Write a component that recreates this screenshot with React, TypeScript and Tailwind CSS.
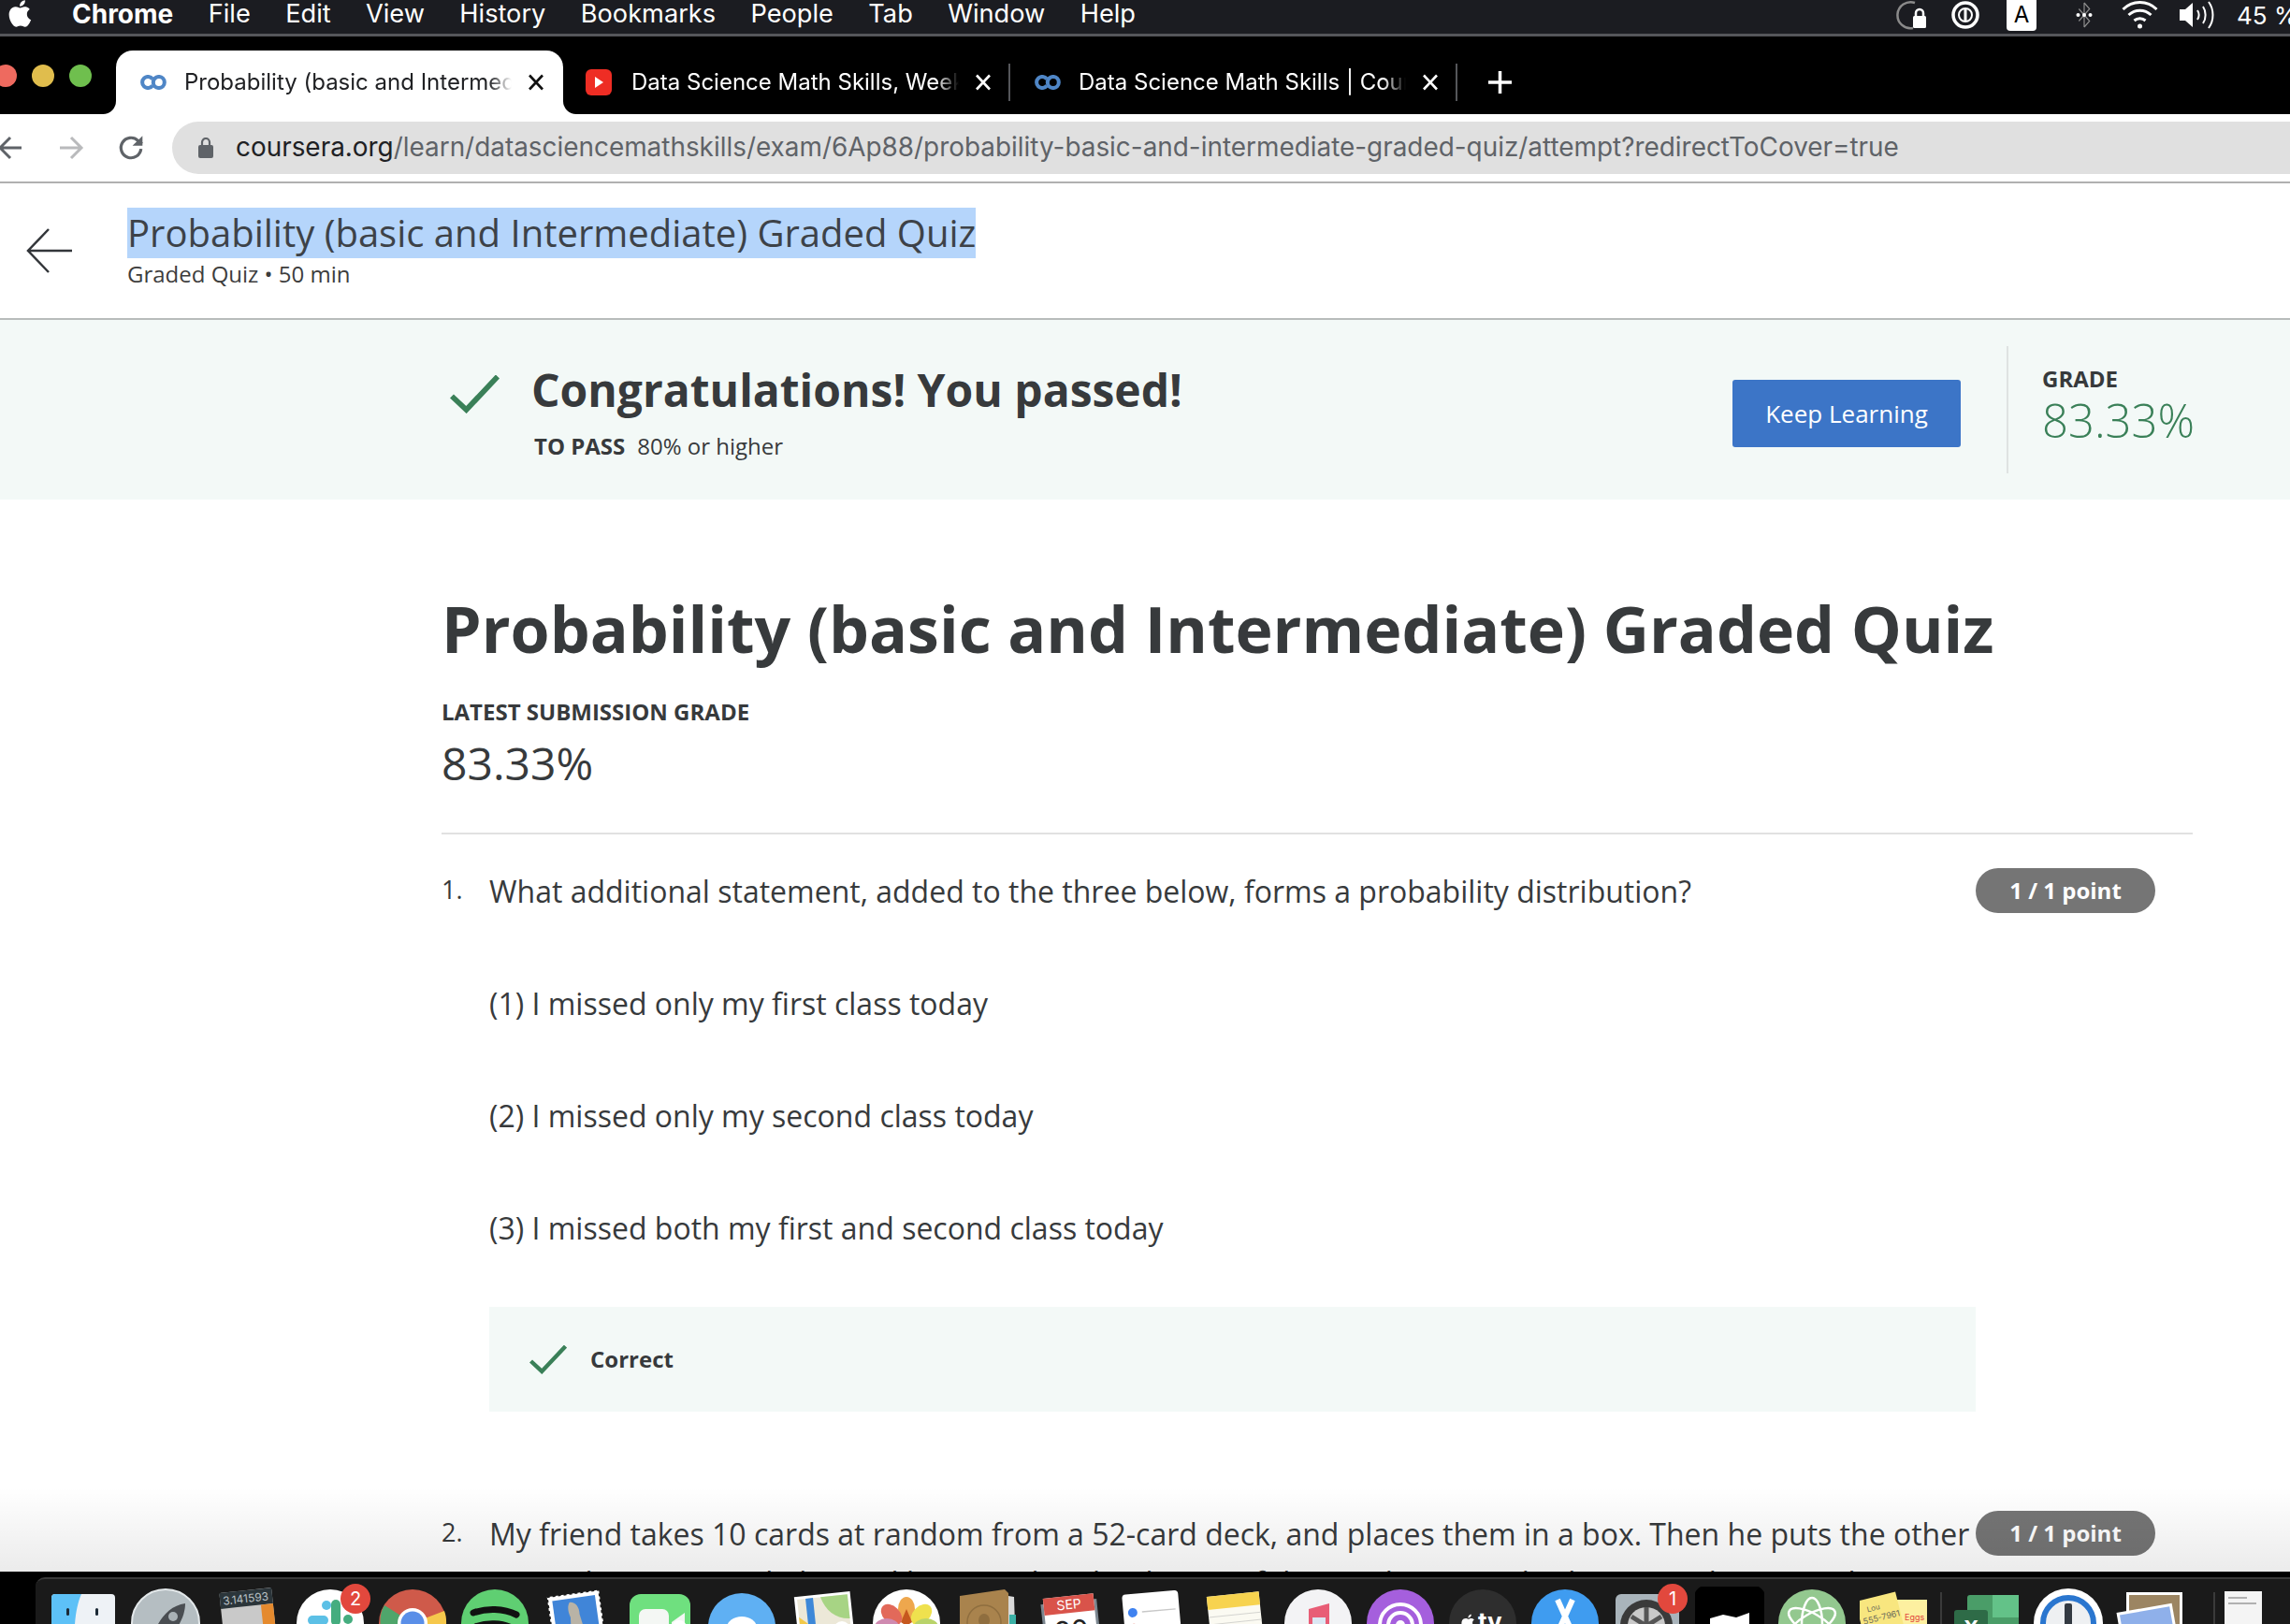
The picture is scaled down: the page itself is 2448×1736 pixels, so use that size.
import type { ReactNode } from "react";

const ink = "text-[#373a3c]";

function CourseraMark() {
  return (
    <svg viewBox="0 0 32 16" className="w-[31px] h-[16px] shrink-0" fill="none" stroke="#4f86c6" strokeWidth="4.200">
      <path d="M15.500 4.400A6.200 6.200 0 1 0 15.500 11.600" />
      <circle cx="22.500" cy="8" r="6.200" />
    </svg>
  );
}

function Check({ className = "" }: { className?: string }) {
  return (
    <svg viewBox="0 0 53 41" className={className} fill="none" stroke="#3a8058" strokeWidth="5.800">
      <path d="M2 22.500L17.500 37L51 1.500" />
    </svg>
  );
}

function MenuBar() {
  const items = ["File", "Edit", "View", "History", "Bookmarks", "People", "Tab", "Window", "Help"];
  return (
    <div className="h-[36px] shrink-0 bg-[#1b1c21] flex items-center text-white font-['Inter',sans-serif] overflow-hidden">
      <svg viewBox="0 0 24 28" className="w-[28px] h-[36px] ml-[9px] -mt-[8px] shrink-0" fill="#fff">
        <path d="M17 15c0-3 2.500-4.300 2.600-4.400-1.400-2.100-3.600-2.400-4.400-2.400-1.900-.2-3.700 1.100-4.600 1.100-1 0-2.500-1.100-4-1-2.100 0-4 1.200-5 3-2.200 3.700-.6 9.200 1.500 12.200 1 1.500 2.300 3.100 3.900 3.100 1.600-.1 2.200-1 4.100-1s2.500 1 4.100 1c1.700 0 2.800-1.500 3.800-3 1.200-1.700 1.700-3.400 1.700-3.500-.1 0-3.700-1.400-3.700-5.100zM14 6c.9-1 1.400-2.400 1.300-3.800-1.200 0-2.700.8-3.600 1.800-.8.900-1.500 2.300-1.300 3.700 1.400.1 2.700-.7 3.600-1.700z" />
      </svg>
      <span className="ml-[40px] font-bold text-[28px] -mt-[6px]">Chrome</span>
      {items.map((item) => (
        <span key={item} className="ml-[37.400px] -mt-[6px] text-[27.200px]">{item}</span>
      ))}
      <div className="ml-auto flex items-center -mt-[4px] shrink-0">
        <svg viewBox="0 0 36 32" className="w-[36px] h-[32px]" fill="none">
          <path d="M22 3a14 14 0 1 0-2 27" stroke="#8a8a8a" strokeWidth="2.500" />
          <rect x="20" y="17" width="14" height="13" rx="1.500" fill="#fff" />
          <path d="M23 17v-3a4 4 0 0 1 8 0v3" stroke="#fff" strokeWidth="2.500" />
        </svg>
        <svg viewBox="0 0 32 32" className="w-[32px] h-[32px] ml-[24px]" fill="none" stroke="#fff">
          <circle cx="16" cy="16" r="13" strokeWidth="3.500" />
          <circle cx="16" cy="16" r="7" strokeWidth="2" />
          <path d="M16 10v12" strokeWidth="3" />
        </svg>
        <div className="w-[32px] h-[34px] ml-[28px] bg-white rounded-b-[4px] text-black text-[24px] flex items-center justify-center">A</div>
        <svg viewBox="0 0 32 36" className="w-[26px] h-[34px] ml-[38px]" fill="none">
          <path d="M16 2v32M16 2l7 8-14 16M16 34l7-8L9 10" stroke="#8a8a8a" strokeWidth="1.500" />
          <circle cx="8" cy="18" r="2.500" fill="#fff" />
          <circle cx="16" cy="18" r="2.500" fill="#fff" />
          <circle cx="24" cy="18" r="2.500" fill="#fff" />
        </svg>
        <svg viewBox="0 0 40 32" className="w-[41px] h-[32px] ml-[26px]" fill="none" stroke="#fff" strokeWidth="3">
          <path d="M2 10c10-10 26-10 36 0M8 16c7-6.500 17-6.500 24 0M14 22c3.500-3 8.500-3 12 0" />
          <circle cx="20" cy="28" r="2.500" fill="#fff" stroke="none" />
        </svg>
        <svg viewBox="0 0 42 32" className="w-[42px] h-[32px] ml-[20px]" fill="none" stroke="#fff" strokeWidth="2">
          <path d="M2 10h6l8-7v26l-8-7H2z" fill="#fff" stroke="none" />
          <path d="M21 11c2 3 2 7 0 10M27 7c3.500 5 3.500 13 0 18M33 2c6 8 6 20 0 28" />
        </svg>
        <span className="ml-[21px] text-[26px] w-[57px] whitespace-nowrap">45 %</span>
      </div>
    </div>
  );
}

function Tab({ icon, title, active }: { icon: ReactNode; title: string; active?: boolean }) {
  return (
    <div className={`relative w-[478px] h-[68px] shrink-0 flex items-center pl-[24px] text-[24px] font-['Inter',sans-serif] ${active ? "bg-white text-[#202124] rounded-t-[18px]" : "text-white"}`}>
      {active && (
        <>
          <div className="absolute -left-[14px] bottom-0 w-[14px] h-[14px] bg-white">
            <div className="w-full h-full bg-black rounded-br-[14px]" />
          </div>
          <div className="absolute -right-[14px] bottom-0 w-[14px] h-[14px] bg-white">
            <div className="w-full h-full bg-black rounded-bl-[14px]" />
          </div>
        </>
      )}
      {icon}
      <span className="ml-[18px] w-[350px] overflow-hidden whitespace-nowrap [mask-image:linear-gradient(to_right,black_93%,transparent)]">{title}</span>
      <svg viewBox="0 0 18 18" className="w-[18px] h-[18px] ml-[17px] shrink-0" fill="none" stroke={active ? "#111" : "#fff"} strokeWidth="2.600">
        <path d="M2 1.500l14 15M16 1.500l-14 15" />
      </svg>
    </div>
  );
}

function TabStrip() {
  return (
    <div className="h-[86px] shrink-0 bg-black border-t-[3px] border-[#55565a] flex items-end overflow-hidden">
      <div className="w-[130px] h-[68px] shrink-0 -ml-[6px] flex items-center gap-[16px] pb-[14px]">
        <span className="w-[24px] h-[24px] rounded-full bg-[#ee6a5f]" />
        <span className="w-[24px] h-[24px] rounded-full bg-[#e0bd4d]" />
        <span className="w-[24px] h-[24px] rounded-full bg-[#6fbf4e]" />
      </div>
      <Tab active title="Probability (basic and Intermediate) Graded Quiz" icon={<CourseraMark />} />
      <Tab
        title="Data Science Math Skills, Week 1 - Coursera"
        icon={
          <div className="w-[28px] h-[28px] mr-[3px] rounded-[6px] bg-[#ee2d24] flex items-center justify-center shrink-0">
            <div className="border-l-[9px] border-l-white border-y-[6px] border-y-transparent" />
          </div>
        }
      />
      <div className="w-[2px] h-[40px] bg-[#55565a] mb-[14px] -ml-[2px] z-10 shrink-0" />
      <Tab title="Data Science Math Skills | Coursera" icon={<CourseraMark />} />
      <div className="w-[2px] h-[40px] bg-[#55565a] mb-[14px] -ml-[2px] shrink-0" />
      <svg viewBox="0 0 25 24" className="w-[25px] h-[24px] ml-[33px] mb-[22px] shrink-0" fill="none" stroke="#fff" strokeWidth="3.500">
        <path d="M12.500 0v24M0 12h25" />
      </svg>
    </div>
  );
}

function Toolbar() {
  return (
    <div className="h-[74px] shrink-0 bg-white flex items-center border-b-[2px] border-[#b0b0b0]">
      <svg viewBox="0 0 28 28" className="w-[28px] h-[28px] -ml-[3px] shrink-0" fill="none" stroke="#5f6368" strokeWidth="3">
        <path d="M26 14H4M14 3L3 14l11 11" />
      </svg>
      <svg viewBox="0 0 28 28" className="w-[28px] h-[28px] ml-[37px] shrink-0" fill="none" stroke="#b9babc" strokeWidth="3">
        <path d="M2 14h22M14 3l11 11-11 11" />
      </svg>
      <svg viewBox="0 0 28 28" className="w-[30px] h-[30px] ml-[35px] shrink-0" fill="none" stroke="#5f6368" strokeWidth="3">
        <path d="M24 15a10 10 0 1 1-3-8.200L25 10" />
        <path d="M25.500 2v10h-10" fill="#5f6368" stroke="none" />
      </svg>
      <div className="ml-[29px] flex-1 h-[56px] bg-[#e0e0e0] rounded-l-[28px] flex items-center font-['Inter',sans-serif] text-[27.900px] whitespace-nowrap overflow-hidden">
        <svg viewBox="0 0 16 22" className="w-[16px] h-[22px] ml-[28px] mr-[24px] shrink-0" fill="none">
          <rect x="0" y="8" width="16" height="14" rx="2" fill="#5f6368" />
          <path d="M4 9V5a4 4 0 0 1 8 0v4" stroke="#5f6368" strokeWidth="2.200" />
        </svg>
        <span className="text-[#202124]">coursera.org</span>
        <span className="text-[#5f6368]">/learn/datasciencemathskills/exam/6Ap88/probability-basic-and-intermediate-graded-quiz/attempt?redirectToCover=true</span>
      </div>
    </div>
  );
}

function QuizHeader() {
  return (
    <div className="h-[146px] shrink-0 bg-white border-b-[2px] border-[#b8bcbb] flex items-start">
      <svg viewBox="0 0 50 50" className="w-[50px] h-[50px] ml-[28px] mt-[47px] shrink-0" fill="none" stroke="#33363a" strokeWidth="2.500">
        <path d="M49 25H2M24 2L2 25l22 23" />
      </svg>
      <div className="ml-[58px] mt-[26px]">
        <div className="w-fit bg-[#b5d5fb] h-[54px] text-[40px] leading-[54px] text-[#3d4248] whitespace-nowrap">
          Probability (basic and Intermediate) Graded Quiz
        </div>
        <div className="text-[24px] leading-[30px] text-[#3d3d3d] mt-[2px]">Graded Quiz • 50 min</div>
      </div>
    </div>
  );
}

function Banner() {
  return (
    <div className="h-[192px] shrink-0 bg-[#f3f9f7] flex items-start pl-[481px]">
      <Check className="w-[53px] h-[41px] mt-[59px] shrink-0" />
      <div className={`ml-[34px] mt-[42px] flex-1 ${ink}`}>
        <h2 className="text-[48px] leading-[65px] font-bold">Congratulations! You passed!</h2>
        <div className="text-[24px] leading-[32px] mt-[12px] ml-[3px]">
          <span className="font-bold">TO PASS</span>
          <span className="ml-[13px]">80% or higher</span>
        </div>
      </div>
      <button className="mt-[64px] w-[244px] h-[72px] rounded-[3px] bg-[#3c75c7] text-white text-[26px] shrink-0">Keep Learning</button>
      <div className="w-[2px] h-[136px] bg-[#dfe3e2] ml-[49px] mt-[28px] shrink-0" />
      <div className="w-[301px] pl-[36px] mt-[47px] shrink-0">
        <div className={`text-[24px] leading-[32px] font-bold ${ink}`}>GRADE</div>
        <div className="text-[49px] leading-[56px] font-light text-[#3a8058]">83.33%</div>
      </div>
    </div>
  );
}

function Question({ n, text, children }: { n: number; text: string; children?: ReactNode }) {
  return (
    <div className={`flex items-start ${ink}`}>
      <div className="w-[51px] text-[27px] leading-[48px] shrink-0">{n}.</div>
      <div className="w-[1589px] shrink-0">
        <div className="text-[32px] leading-[52px]">{text}</div>
        {children}
      </div>
      <div className="w-[192px] h-[48px] mt-[1px] rounded-full bg-[#757575] text-white font-bold text-[24px] flex items-center justify-center shrink-0">
        1 / 1 point
      </div>
    </div>
  );
}

function Icon({ children }: { children: ReactNode }) {
  return (
    <svg viewBox="0 0 74 74" className="w-[74px] h-[74px] shrink-0">
      {children}
    </svg>
  );
}

function Badge({ n }: { n: number }) {
  return (
    <div className="absolute -top-[3px] -right-[6px] w-[32px] h-[32px] rounded-full bg-[#e2483d] text-white text-[20px] flex items-center justify-center font-['Inter',sans-serif]">
      {n}
    </div>
  );
}

function Dock() {
  return (
    <div className="absolute left-0 right-0 bottom-0 h-[56px] bg-black pt-[6px]">
      <div className="ml-[38px] h-[50px] bg-[#1a1a1a] rounded-tl-[10px] border-t-[2px] border-[#3a3a3a] flex items-start gap-[14px] pl-[14px] pt-[8px] overflow-hidden">
        {/* finder */}
        <Icon>
          <rect x="3" y="8" width="68" height="66" rx="4" fill="#eef2f6" />
          <path d="M7 8h28c-6 14-8 30-8 66H3V12a4 4 0 0 1 4-4z" fill="#5dc1f7" />
          <rect x="19" y="23" width="3" height="8" rx="1.500" fill="#1c2a36" />
          <rect x="50" y="23" width="3" height="8" rx="1.500" fill="#1c2a36" />
        </Icon>
        {/* launchpad */}
        <Icon>
          <circle cx="37" cy="39" r="36" fill="#b5bec2" stroke="#e3e8ea" strokeWidth="2" />
          <path d="M58 18c-14 2-24 12-30 24l-16 14 24 4 8-10c8-8 14-20 14-32z" fill="#4a4e52" />
          <circle cx="45" cy="32" r="5" fill="#aab2b6" />
        </Icon>
        {/* calculator */}
        <Icon>
          <g transform="rotate(-6 37 40)">
            <rect x="10" y="4" width="56" height="70" rx="2" fill="#c9c9c9" />
            <rect x="10" y="4" width="56" height="17" fill="#2b353a" />
            <rect x="53" y="21" width="13" height="53" fill="#e58a2e" />
            <text x="62" y="17" textAnchor="end" fontSize="12" fill="#b8c0c4" fontFamily="Inter, sans-serif">3.141593</text>
          </g>
        </Icon>
        {/* slack */}
        <div className="relative shrink-0">
          <Icon>
            <circle cx="37" cy="39" r="36" fill="#fff" />
            <rect x="13" y="31" width="22" height="10" rx="5" fill="#5cc0e6" />
            <rect x="28" y="15" width="10" height="10" rx="5" fill="#5cc0e6" />
            <rect x="38" y="14" width="10" height="28" rx="5" fill="#45ad7f" />
            <rect x="51" y="30" width="10" height="10" rx="5" fill="#45ad7f" />
          </Icon>
          <Badge n={2} />
        </div>
        {/* chrome */}
        <Icon>
          <circle cx="37" cy="39" r="36" fill="#cf5a4a" />
          <path d="M37 39L71 26c4 10 3 30-10 40z" fill="#f6c84c" />
          <path d="M37 39L7 20C-2 34 2 60 24 73z" fill="#4fa56b" />
          <circle cx="37" cy="39" r="16" fill="#fff" />
          <circle cx="37" cy="39" r="12.500" fill="#5a8fe8" />
        </Icon>
        {/* spotify */}
        <Icon>
          <circle cx="37" cy="39" r="36" fill="#5fcf72" />
          <path d="M14 28c14-5 32-5 46 2" fill="none" stroke="#111" strokeWidth="7" strokeLinecap="round" />
          <path d="M17 42c12-4 27-4 39 2" fill="none" stroke="#111" strokeWidth="6" strokeLinecap="round" />
        </Icon>
        {/* mail stamp */}
        <Icon>
          <g transform="rotate(-8 37 40)">
            <rect x="9" y="7" width="56" height="70" fill="#fff" />
            <rect x="9" y="7" width="56" height="70" fill="none" stroke="#1a1a1a" strokeWidth="2" strokeDasharray="3 3" />
            <rect x="14" y="12" width="46" height="62" fill="#4085d8" />
            <path d="M32 16c6 0 10 6 9 14l4 24-16-2 2-20c-2-6-2-12 1-16z" fill="#b9b3a6" />
          </g>
        </Icon>
        {/* facetime */}
        <Icon>
          <rect x="5" y="8" width="65" height="66" rx="12" fill="#6fe07f" />
          <rect x="15" y="24" width="32" height="40" rx="7" fill="#f4f7f4" />
          <path d="M50 38l14-10v30l-14-10z" fill="#f4f7f4" />
          <circle cx="58" cy="44" r="8" fill="#fff" />
        </Icon>
        {/* messages */}
        <Icon>
          <circle cx="37" cy="43" r="36" fill="#5fb0f3" />
          <ellipse cx="37" cy="44" rx="16" ry="12" fill="#fff" />
        </Icon>
        {/* maps */}
        <Icon>
          <g transform="rotate(-6 37 40)">
            <rect x="8" y="8" width="60" height="68" fill="#fff" />
            <rect x="11" y="11" width="54" height="64" fill="#ece8d8" />
            <path d="M36 11h29v26C50 36 40 26 36 11z" fill="#a7d484" />
            <rect x="20" y="11" width="8" height="64" fill="#3d88d8" />
            <path d="M11 30l9 8v36h-9z" fill="#f3c949" />
          </g>
          <circle cx="56" cy="46" r="9" fill="#fff" />
        </Icon>
        {/* photos */}
        <Icon>
          <circle cx="37" cy="39" r="36" fill="#fff" />
          <ellipse cx="37" cy="24" rx="9" ry="13" fill="#eea74d" />
          <ellipse cx="53" cy="30" rx="9" ry="13" transform="rotate(45 53 30)" fill="#efe14e" />
          <ellipse cx="21" cy="30" rx="9" ry="13" transform="rotate(-45 21 30)" fill="#e2695a" />
          <ellipse cx="58" cy="43" rx="9" ry="13" transform="rotate(90 58 43)" fill="#b9d36a" />
          <ellipse cx="16" cy="43" rx="9" ry="13" transform="rotate(90 16 43)" fill="#cf8ab0" />
          <path d="M37 24l6 14-6 4-6-4z" fill="#c6581e" />
        </Icon>
        {/* contacts */}
        <Icon>
          <path d="M6 10l48-7 4 4 2 70H6z" fill="#a9834d" />
          <path d="M58 10l6 1 2 60h-8z" fill="#d9d9d9" />
          <rect x="59" y="30" width="7" height="16" fill="#3bb0a5" />
          <circle cx="32" cy="38" r="18" fill="none" stroke="#8f6e3f" strokeWidth="1.500" />
          <ellipse cx="32" cy="36" rx="6" ry="7" fill="#8f6e3f" />
        </Icon>
        {/* calendar */}
        <Icon>
          <g transform="rotate(-6 37 42)">
            <rect x="7" y="16" width="60" height="62" fill="#7c8790" />
            <rect x="10" y="10" width="54" height="70" fill="#fff" />
            <rect x="10" y="10" width="54" height="18" fill="#d9534a" />
            <text x="37" y="24" textAnchor="middle" fontSize="14" fill="#fff" fontFamily="Inter, sans-serif">SEP</text>
            <text x="37" y="58" textAnchor="middle" fontSize="30" fill="#222" fontFamily="Inter, sans-serif">20</text>
          </g>
        </Icon>
        {/* reminders */}
        <Icon>
          <g transform="rotate(-5 37 40)">
            <rect x="6" y="6" width="60" height="70" rx="4" fill="#fff" />
            <circle cx="16" cy="26" r="5" fill="#3f82f0" />
            <circle cx="16" cy="43" r="5" fill="#dc5a44" />
            <path d="M26 26h36M26 43h36" stroke="#c8c8c8" strokeWidth="1.500" />
          </g>
        </Icon>
        {/* notes */}
        <Icon>
          <g transform="rotate(-6 37 40)">
            <rect x="9" y="8" width="56" height="70" fill="#fbfaf2" />
            <rect x="9" y="8" width="56" height="14" fill="#f7d34f" />
            <path d="M9 30h56M9 38h56M9 46h56" stroke="#d4d4d0" strokeWidth="1" />
          </g>
        </Icon>
        {/* music */}
        <Icon>
          <circle cx="37" cy="39" r="36" fill="#f3f3f5" />
          <path d="M27 24l22-6v44H27z" fill="#e85d76" />
          <rect x="31" y="33" width="14" height="30" fill="#dbe7f3" />
        </Icon>
        {/* podcasts */}
        <Icon>
          <circle cx="37" cy="39" r="36" fill="#a55fdd" />
          <circle cx="37" cy="41" r="22" fill="none" stroke="#fff" strokeWidth="4" />
          <circle cx="37" cy="41" r="13" fill="none" stroke="#fff" strokeWidth="4" />
          <circle cx="37" cy="41" r="5" fill="#fff" />
        </Icon>
        {/* apple tv */}
        <div className="relative shrink-0">
          <Icon>
            <circle cx="37" cy="39" r="36" fill="#2e2e2e" />
          </Icon>
          <div className="absolute left-[14px] top-[24px] text-white font-bold text-[26px] leading-[28px] font-['Inter',sans-serif] flex items-center gap-[1px]">
            <svg viewBox="0 0 24 28" className="w-[17px] h-[20px]" fill="#fff">
              <path d="M17 15c0-3 2.500-4.300 2.600-4.400-1.400-2.100-3.600-2.400-4.400-2.400-1.900-.2-3.700 1.100-4.600 1.100-1 0-2.500-1.100-4-1-2.100 0-4 1.200-5 3-2.200 3.700-.6 9.200 1.500 12.200 1 1.500 2.300 3.100 3.900 3.100 1.600-.1 2.200-1 4.100-1s2.500 1 4.100 1c1.700 0 2.800-1.500 3.800-3 1.200-1.700 1.700-3.400 1.700-3.500-.1 0-3.700-1.400-3.700-5.100zM14 6c.9-1 1.400-2.400 1.300-3.800-1.200 0-2.700.8-3.600 1.800-.8.900-1.500 2.300-1.300 3.700 1.400.1 2.700-.7 3.600-1.700z" />
            </svg>
            tv
          </div>
        </div>
        {/* app store */}
        <Icon>
          <circle cx="37" cy="39" r="36" fill="#3f9cf0" />
          <path d="M29 14l18 40M45 14L27 54" stroke="#fff" strokeWidth="6" fill="none" />
        </Icon>
        {/* system prefs */}
        <div className="relative shrink-0">
          <Icon>
            <rect x="3" y="8" width="68" height="66" rx="6" fill="#a9b4bb" />
            <circle cx="36" cy="42" r="28" fill="#3a3a3a" />
            <circle cx="36" cy="42" r="20" fill="#c9c9c9" />
            <path d="M36 22v20M20 32l16 10 16-10" stroke="#555" strokeWidth="5" fill="none" />
          </Icon>
          <Badge n={1} />
        </div>
        {/* black app */}
        <Icon>
          <rect x="-2" y="-2" width="78" height="78" rx="16" fill="#000" />
          <path d="M16 34l14-4 14 3 14-5v14l-14 5-14-3-14 4z" fill="#fff" />
        </Icon>
        {/* atom */}
        <Icon>
          <circle cx="37" cy="39" r="36" fill="#93c88f" />
          <ellipse cx="37" cy="40" rx="28" ry="11" fill="none" stroke="#fff" strokeWidth="2.500" transform="rotate(30 37 40)" />
          <ellipse cx="37" cy="40" rx="28" ry="11" fill="none" stroke="#fff" strokeWidth="2.500" transform="rotate(-30 37 40)" />
          <ellipse cx="37" cy="40" rx="28" ry="11" fill="none" stroke="#fff" strokeWidth="2.500" transform="rotate(90 37 40)" />
        </Icon>
        {/* stickies */}
        <Icon>
          <rect x="38" y="14" width="34" height="60" fill="#fdf0a0" />
          <g transform="rotate(-14 24 40)">
            <rect x="2" y="10" width="44" height="66" fill="#f8e67f" />
            <text x="12" y="24" fontSize="8" fill="#6b6b5a" fontFamily="Inter, sans-serif">Lou</text>
            <text x="5" y="36" fontSize="9" fill="#6b6b5a" fontFamily="Inter, sans-serif">555-7961</text>
          </g>
          <text x="48" y="36" fontSize="9" fill="#e2483d" fontFamily="Inter, sans-serif">Eggs</text>
        </Icon>
        <div className="w-[2px] h-[40px] bg-[#3a3a3a] mt-[6px] -ml-[2px] -mr-[4px] shrink-0" />
        {/* excel */}
        <Icon>
          <rect x="17" y="9" width="55" height="65" rx="3" fill="#4a9d68" />
          <rect x="44" y="9" width="28" height="24" fill="#63c288" />
          <rect x="3" y="25" width="36" height="49" rx="3" fill="#2e6b47" />
          <text x="21" y="52" textAnchor="middle" fontSize="22" fontWeight="700" fill="#fff" fontFamily="Inter, sans-serif">X</text>
        </Icon>
        {/* 1password */}
        <Icon>
          <circle cx="37" cy="39" r="37" fill="#fff" />
          <circle cx="37" cy="39" r="27" fill="#eef0f2" stroke="#2a76cf" strokeWidth="6" />
          <rect x="33" y="18" width="8" height="30" rx="2" fill="#333a42" />
        </Icon>
        {/* preview */}
        <Icon>
          <rect x="11" y="6" width="60" height="50" fill="#fff" />
          <rect x="14" y="9" width="54" height="46" fill="#9c8562" />
          <g transform="rotate(-10 37 45)">
            <rect x="4" y="22" width="60" height="52" fill="#fff" />
            <rect x="7" y="25" width="54" height="48" fill="#8fb0ea" />
          </g>
        </Icon>
        <div className="w-[2px] h-[40px] bg-[#3a3a3a] mt-[6px] ml-[16px] -mr-[4px] shrink-0" />
        <svg viewBox="0 0 40 74" className="w-[40px] h-[74px] shrink-0">
          <rect x="0" y="5" width="40" height="70" fill="#f4f4f4" />
          <path d="M4 12h20M4 18h30" stroke="#9a9a9a" strokeWidth="1.500" />
        </svg>
      </div>
    </div>
  );
}

export default function App() {
  return (
    <div className="relative w-[2448px] h-[1736px] overflow-hidden bg-white flex flex-col font-['Open_Sans',sans-serif]">
      <MenuBar />
      <TabStrip />
      <Toolbar />
      <QuizHeader />
      <Banner />
      <main className={`pl-[472px] pt-[98px] ${ink}`}>
        <h1 className="text-[68px] leading-[80px] font-bold whitespace-nowrap">Probability (basic and Intermediate) Graded Quiz</h1>
        <div className="mt-[33px] text-[24px] leading-[32px] font-bold">LATEST SUBMISSION GRADE</div>
        <div className="text-[48px] leading-[64px] mt-[7px]">83.33%</div>
        <div className="w-[1872px] h-[2px] bg-[#e1e1e1] mt-[42px]" />
        <div className="mt-[35px]">
          <Question n={1} text="What additional statement, added to the three below, forms a probability distribution?">
            <div className="mt-[68px] text-[32px] leading-[52px]">(1) I missed only my first class today</div>
            <div className="mt-[68px] text-[32px] leading-[52px]">(2) I missed only my second class today</div>
            <div className="mt-[68px] text-[32px] leading-[52px]">(3) I missed both my first and second class today</div>
            <div className="mt-[58px] h-[112px] bg-[#f3f9f7] flex items-center">
              <Check className="w-[40px] h-[31px] ml-[43px] shrink-0" />
              <span className="ml-[25px] text-[24px] font-bold">Correct</span>
            </div>
          </Question>
        </div>
        <div className="mt-[105px]">
          <Question n={2} text="My friend takes 10 cards at random from a 52-card deck, and places them in a box. Then he puts the other 42 cards in a second identical box. He then loads one of the two boxes and asks me to choose at the" />
        </div>
      </main>
      <div className="absolute left-0 right-0 bottom-[56px] h-[90px] bg-gradient-to-b from-transparent to-[#00000014]" />
      <Dock />
    </div>
  );
}
